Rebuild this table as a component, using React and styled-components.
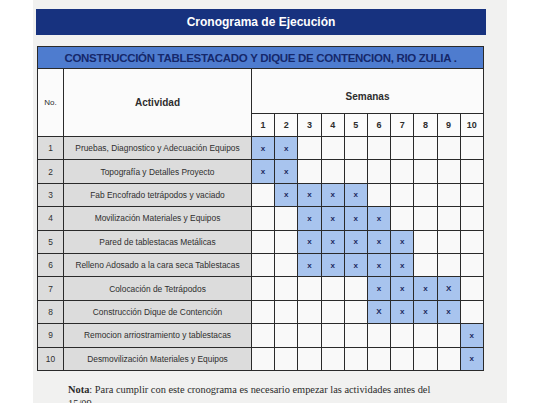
import React from 'react';
import styled, { createGlobalStyle } from 'styled-components';

const Global = createGlobalStyle`
  html, body {
    margin: 0;
    padding: 0;
    background: #ffffff;
  }
  body {
    width: 540px;
    height: 403px;
    overflow: hidden;
  }
`;

const Paper = styled.div`
  margin-left: 33px;
  width: 474px;
  height: 403px;
  background: #f1f1f0;
  padding: 9px 0 0 3px;
  box-sizing: border-box;
  overflow: hidden;
`;

const TitleBar = styled.div`
  width: 450px;
  height: 26px;
  background: #17327f;
  color: #ffffff;
  display: flex;
  align-items: center;
  justify-content: center;
  font-family: "Liberation Sans", Arial, sans-serif;
  font-weight: bold;
  font-size: 12px;
`;

const Table = styled.table`
  margin: 11px 0 0 1px;
  width: 447px;
  border-collapse: collapse;
  table-layout: fixed;
  font-family: "Liberation Sans", Arial, sans-serif;
  color: #2d2d2d;
  border: 1px solid #2a2a2a;
`;

const Subtitle = styled.th`
  height: 21px;
  padding: 0;
  background: #4e7ccf;
  color: #15286b;
  font-size: 11.5px;
  font-weight: bold;
  letter-spacing: -0.3px;
  border: 1px solid #2a2a2a;
  text-align: center;
`;

const HeadCell = styled.th`
  background: #fbfbfb;
  border: 1px solid #2a2a2a;
  padding: 0;
  font-size: ${p => (p.$small ? '8px' : p.$num ? '9px' : '10px')};
  font-weight: ${p => (p.$small ? 'normal' : 'bold')};
  height: ${p => p.$h || 'auto'};
  padding-top: ${p => p.$pt || '0'};
  vertical-align: middle;
  text-align: center;
`;

const Cell = styled.td`
  height: 22.4px;
  padding: 0;
  border: 1px solid #2a2a2a;
  text-align: center;
  font-size: ${p => (p.$label ? '8.4px' : '8px')};
  background: ${p => (p.$on ? '#a8c4ee' : p.$label ? '#dcdcdc' : '#f9f9f9')};
  color: ${p => (p.$on ? '#1c2a5e' : '#2f2f2f')};
  font-weight: ${p => (p.$on ? 'bold' : 'normal')};
  white-space: nowrap;
  overflow: hidden;
`;

const Note = styled.p`
  margin: 12px 0 0 32px;
  font-family: "Liberation Serif", "Times New Roman", serif;
  font-size: 10.4px;
  line-height: 14px;
  color: #2b2b2b;
  width: 372px;
`;

const weeks = [1, 2, 3, 4, 5, 6, 7, 8, 9, 10];

const activities = [
  { name: 'Pruebas, Diagnostico y Adecuación Equipos', on: { 1: 'x', 2: 'x' } },
  { name: 'Topografía y Detalles Proyecto', on: { 1: 'x', 2: 'x' } },
  { name: 'Fab Encofrado tetrápodos y vaciado', on: { 2: 'x', 3: 'x', 4: 'x', 5: 'x' } },
  { name: 'Movilización Materiales y Equipos', on: { 3: 'x', 4: 'x', 5: 'x', 6: 'x' } },
  { name: 'Pared de tablestacas Metálicas', on: { 3: 'x', 4: 'x', 5: 'x', 6: 'x', 7: 'x' } },
  { name: 'Relleno Adosado a la cara seca Tablestacas', on: { 3: 'x', 4: 'x', 5: 'x', 6: 'x', 7: 'x' } },
  { name: 'Colocación de Tetrápodos', on: { 6: 'x', 7: 'x', 8: 'x', 9: 'X' } },
  { name: 'Construcción Dique de Contención', on: { 6: 'X', 7: 'x', 8: 'x', 9: 'x' } },
  { name: 'Remocion arriostramiento y tablestacas', on: { 10: 'x' } },
  { name: 'Desmovilización Materiales y Equipos', on: { 10: 'x' } },
];

const App = () => {
  return (
    <>
      <Global />
      <Paper>
        <TitleBar>Cronograma de Ejecución</TitleBar>
        <Table>
          <colgroup>
            <col style={{ width: 26 }} />
            <col style={{ width: 188 }} />
            {weeks.map(w => <col key={w} />)}
          </colgroup>
          <thead>
            <tr>
              <Subtitle colSpan={12}>CONSTRUCCIÓN TABLESTACADO Y DIQUE DE CONTENCION, RIO ZULIA .</Subtitle>
            </tr>
            <tr>
              <HeadCell rowSpan={2} $small>No.</HeadCell>
              <HeadCell rowSpan={2}>Actividad</HeadCell>
              <HeadCell colSpan={10} $h="33px" $pt="11px">Semanas</HeadCell>
            </tr>
            <tr>
              {weeks.map(w => <HeadCell key={w} $num $h="22px">{w}</HeadCell>)}
            </tr>
          </thead>
          <tbody>
            {activities.map((a, i) => (
              <tr key={i}>
                <Cell $label>{i + 1}</Cell>
                <Cell $label>{a.name}</Cell>
                {weeks.map(w => (
                  <Cell key={w} $on={!!a.on[w]}>{a.on[w] || ''}</Cell>
                ))}
              </tr>
            ))}
          </tbody>
        </Table>
        <Note>
          <b>Nota</b>: Para cumplir con este cronograma es necesario empezar las actividades antes del 15/09
        </Note>
      </Paper>
    </>
  );
};

export default App;
